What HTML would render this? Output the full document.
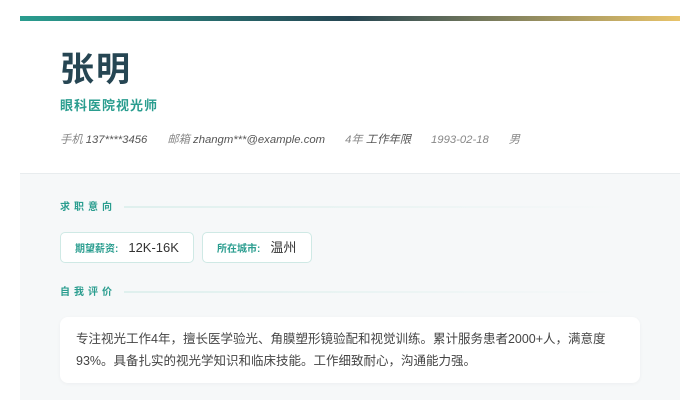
<!DOCTYPE html>
<html><head><meta charset="utf-8"><style>
*{margin:0;padding:0;box-sizing:border-box}
body{width:700px;height:400px;background:#fff;font-family:"Liberation Sans","Noto Sans CJK SC",sans-serif;position:relative;overflow:hidden}
.bar{position:absolute;left:20px;top:16px;width:660px;height:5px;background:linear-gradient(90deg,#2a9d8f 0%,#264653 50%,#e9c46a 100%)}
.name{position:absolute;left:60px;top:48px;font-size:34px;font-weight:bold;color:#264653;letter-spacing:2px;line-height:44px}
.title{position:absolute;left:60px;top:97px;font-size:13px;font-weight:bold;color:#2a9d8f;letter-spacing:1px;line-height:18px}
.info{position:absolute;left:60px;top:132px;font-size:11.3px;font-style:italic;color:#888;line-height:16px;white-space:nowrap}
.info span{margin-right:20px}.info b{font-weight:normal;color:#555}
.gray{position:absolute;left:20px;top:173px;width:660px;height:227px;background:#f6f8f9;border-top:1px solid #e8ecee}
.sec{position:absolute;left:60px;font-size:10px;font-weight:bold;color:#2a9d8f;letter-spacing:4px;line-height:14px}
.line{position:absolute;left:124px;width:500px;height:2px;background:linear-gradient(90deg,#dff0ee,#f6f8f9)}
.tag{position:absolute;top:232px;height:31px;background:#fff;border:1px solid #cfe9e5;border-radius:5px;font-size:10px;color:#2a9d8f;font-weight:bold;line-height:29px;padding-left:14px}
.tag b{font-weight:normal;color:#333;font-size:13px;margin-left:10px}
.box{position:absolute;left:60px;top:317px;width:580px;height:66px;background:#fff;border-radius:8px;box-shadow:0 1px 4px rgba(0,0,0,.04);font-size:12.5px;color:#444;line-height:22px;padding:11px 16px}
</style></head><body>
<div class="bar"></div>
<div class="name">张明</div>
<div class="title">眼科医院视光师</div>
<div class="info"><span>手机 <b>137****3456</b></span><span>邮箱 <b>zhangm***@example.com</b></span><span>4年 <b>工作年限</b></span><span>1993-02-18</span><span>男</span></div>
<div class="gray"></div>
<div class="sec" style="top:201px">求职意向</div><div class="line" style="top:206px"></div>
<div class="tag" style="left:60px;width:134px">期望薪资:<b>12K-16K</b></div>
<div class="tag" style="left:202px;width:110px">所在城市:<b>温州</b></div>
<div class="sec" style="top:286px">自我评价</div><div class="line" style="top:291px"></div>
<div class="box">专注视光工作4年，擅长医学验光、角膜塑形镜验配和视觉训练。累计服务患者2000+人，满意度93%。具备扎实的视光学知识和临床技能。工作细致耐心，沟通能力强。</div>
</body></html>
